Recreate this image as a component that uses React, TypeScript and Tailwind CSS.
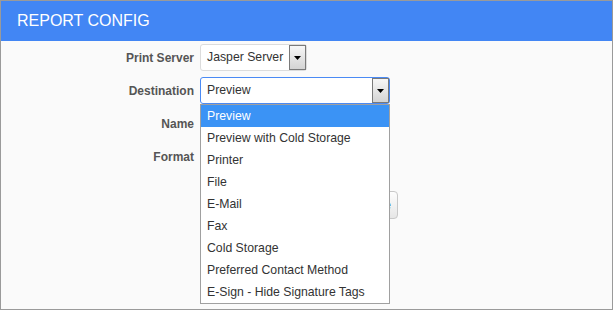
import React from "react";

const Arrow = () => (
  <svg width="9" height="6" viewBox="0 0 9 6" className="block">
    <polygon points="1,1 8,1 4.5,5" fill="#000" />
  </svg>
);

const ArrowBtn = () => (
  <div className="w-[17px] h-full border border-[#7a7a7a] bg-gradient-to-b from-[#f7f7f7] to-[#d4d4d4] flex items-center justify-center">
    <Arrow />
  </div>
);

const items = [
  "Preview",
  "Preview with Cold Storage",
  "Printer",
  "File",
  "E-Mail",
  "Fax",
  "Cold Storage",
  "Preferred Contact Method",
  "E-Sign - Hide Signature Tags",
];

export default function App() {
  return (
    <div
      className="w-[613px] h-[310px] border border-[#9a9a9a] bg-[#fafafa] flex flex-col overflow-hidden"
      style={{ fontFamily: '"Liberation Sans", Arial, sans-serif' }}
    >
      <div className="h-[40px] bg-[#4286f4] text-white text-[16px] pl-[16px] flex items-center shrink-0">
        REPORT CONFIG
      </div>
      <div className="grid grid-cols-[193px_auto] gap-x-[6px] gap-y-[6px] pt-[3px] text-[12px] items-center">
        <div className="text-right font-bold text-[#555]">Print Server</div>
        <div className="w-[107px] h-[27px] border border-[#dcdcdc] rounded-[3px] bg-white flex items-center">
          <span className="flex-1 pl-[6px] text-[#333] text-[12.25px]">Jasper Server</span>
          <ArrowBtn />
        </div>

        <div className="text-right font-bold text-[#555]">Destination</div>
        <div className="relative z-10 w-[190px] h-[27px] border border-[#4a8af4] rounded-[3px] bg-white flex items-center">
          <span className="flex-1 pl-[6px] text-[#333] text-[12.25px]">Preview</span>
          <ArrowBtn />
          <div className="absolute left-[-1px] top-[26px] w-[190px] border border-[#a0a0a0] bg-white text-[12.25px]">
            {items.map((it, i) => (
              <div
                key={it}
                className={
                  "h-[22px] pl-[6px] pt-[1px] flex items-center " +
                  (i === 0 ? "bg-[#3b93f5] text-white" : "text-[#333]")
                }
              >
                {it}
              </div>
            ))}
          </div>
        </div>

        <div className="text-right font-bold text-[#555]">Name</div>
        <div className="w-[180px] h-[27px] border border-[#dcdcdc] rounded-[3px] bg-white" />

        <div className="text-right font-bold text-[#555]">Format</div>
        <div className="w-[180px] h-[27px] border border-[#dcdcdc] rounded-[3px] bg-white" />

        <div />
        <div className="mt-[15px] pl-[110px]">
          <div className="w-[88px] h-[28px] border border-[#c8c8c8] rounded-[4px] bg-gradient-to-b from-[#fdfdfd] to-[#e6e6e6] flex items-center justify-end pr-[6px] text-[#2a5db0]">
            Generate
          </div>
        </div>
      </div>
    </div>
  );
}
